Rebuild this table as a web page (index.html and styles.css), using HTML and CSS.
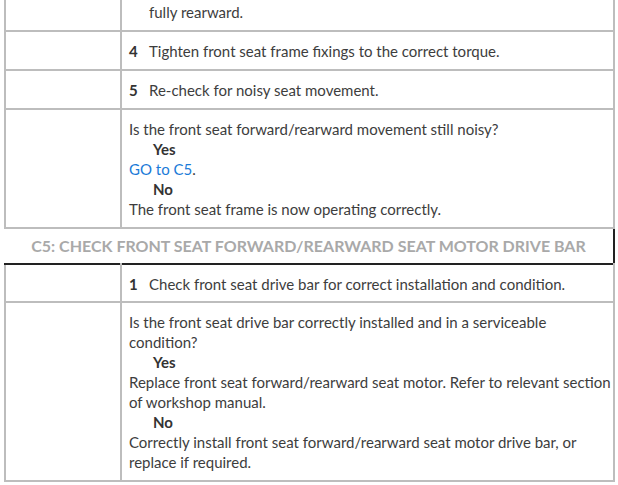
FILE: index.html
```html
<!DOCTYPE html>
<html>
<head>
<meta charset="utf-8">
<link rel="stylesheet" href="styles.css">
</head>
<body>
<div class="page">
  <table class="steps first">
    <tr>
      <td class="side"></td>
      <td class="main"><div class="step"><span class="num"></span><span class="txt">fully rearward.</span></div></td>
    </tr>
    <tr>
      <td class="side"></td>
      <td class="main"><div class="step"><span class="num">4</span><span class="txt">Tighten front seat frame fixings to the correct torque.</span></div></td>
    </tr>
    <tr>
      <td class="side"></td>
      <td class="main"><div class="step"><span class="num">5</span><span class="txt">Re-check for noisy seat movement.</span></div></td>
    </tr>
    <tr>
      <td class="side"></td>
      <td class="main">
        <p>Is the front seat forward/rearward movement still noisy?</p>
        <p class="ans">Yes</p>
        <p><a class="link" href="#c5">GO to C5</a>.</p>
        <p class="ans">No</p>
        <p>The front seat frame is now operating correctly.</p>
      </td>
    </tr>
  </table>
  <div class="heading" id="c5">C5: CHECK FRONT SEAT FORWARD/REARWARD SEAT MOTOR DRIVE BAR</div>
  <table class="steps second">
    <tr>
      <td class="side"></td>
      <td class="main"><div class="step"><span class="num">1</span><span class="txt">Check front seat drive bar for correct installation and condition.</span></div></td>
    </tr>
    <tr>
      <td class="side"></td>
      <td class="main">
        <p>Is the front seat drive bar correctly installed and in a serviceable condition?</p>
        <p class="ans">Yes</p>
        <p>Replace front seat forward/rearward seat motor. Refer to relevant section of workshop manual.</p>
        <p class="ans">No</p>
        <p>Correctly install front seat forward/rearward seat motor drive bar, or replace if required.</p>
      </td>
    </tr>
  </table>
</div>
</body>
</html>
```
FILE: styles.css
```css
html, body {
  margin: 0;
  padding: 0;
  background: #fff;
}
body {
  font-family: Lato, "Open Sans", sans-serif;
  font-size: 15px;
  line-height: 20px;
  color: #3d3d3d;
  overflow: hidden;
}
.page {
  width: 611px;
  margin-left: 4px;
}
.steps {
  width: 611px;
  border-collapse: collapse;
  table-layout: fixed;
}
.steps td {
  border: 2px solid #bdbdbd;
  vertical-align: top;
}
.steps .side {
  width: 112px;
}
.steps .main {
  padding: 9px 2px 8px 7px;
}
.first {
  margin-top: -9px;
}
.second tr:first-child td {
  border-top: 2px solid #222;
}
.second tr:first-child .main {
  padding-bottom: 7px;
}
.step {
  display: flex;
}
.num {
  width: 20px;
  flex: none;
  font-weight: 700;
  color: #333;
}
.txt {
  flex: 1;
}
p {
  margin: 0;
}
.ans {
  padding-left: 24px;
  font-weight: 700;
  color: #333;
}
.link {
  color: #1b7bd8;
  text-decoration: none;
}
.heading {
  height: 34px;
  line-height: 34px;
  text-align: center;
  font-size: 16px;
  font-weight: 700;
  color: #a9a9a9;
  border-right: 2px solid #222;
  box-sizing: border-box;
}
```
